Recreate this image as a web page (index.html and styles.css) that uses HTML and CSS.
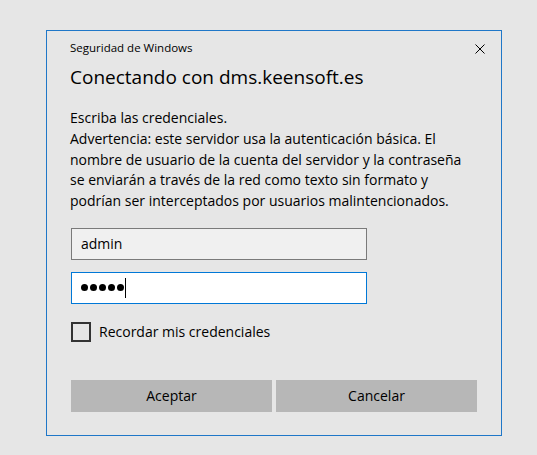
FILE: index.html
```html
<!DOCTYPE html>
<html lang="es">
<head>
<meta charset="utf-8">
<title>Seguridad de Windows</title>
<link rel="stylesheet" href="styles.css">
</head>
<body>
<div class="dialog">
  <div class="titlebar">
    <span class="app-title">Seguridad de Windows</span>
    <svg class="close" width="10" height="10" viewBox="0 0 10 10" aria-label="Cerrar">
      <path d="M0.5 0.5 L9.5 9.5 M9.5 0.5 L0.5 9.5" stroke="#000" stroke-width="1" fill="none"/>
    </svg>
  </div>
  <div class="content">
    <h1 class="heading">Conectando con dms.keensoft.es</h1>
    <p class="message">Escriba las credenciales.<br>Advertencia: este servidor usa la autenticación básica. El<br>nombre de usuario de la cuenta del servidor y la contraseña<br>se enviarán a través de la red como texto sin formato y<br>podrían ser interceptados por usuarios malintencionados.</p>
    <div class="field field-user">admin</div>
    <div class="field field-pass">
      <span class="dot"></span><span class="dot"></span><span class="dot"></span><span class="dot"></span><span class="dot"></span><span class="caret"></span>
    </div>
    <label class="remember">
      <span class="checkbox"></span>
      <span class="remember-text">Recordar mis credenciales</span>
    </label>
    <div class="buttons">
      <div class="btn">Aceptar</div>
      <div class="btn">Cancelar</div>
    </div>
  </div>
</div>
</body>
</html>
```

FILE: styles.css
```css
html, body {
  margin: 0;
  padding: 0;
  background: #e6e6e6;
}
body {
  font-family: "Open Sans", "Noto Sans", sans-serif;
  color: #000;
  width: 537px;
  height: 455px;
  overflow: hidden;
}
.dialog {
  box-sizing: border-box;
  width: 456px;
  height: 406px;
  margin: 30px 0 0 46px;
  border: 1px solid #1f77c8;
  background: #e6e6e6;
}
.titlebar {
  display: flex;
  align-items: center;
  justify-content: space-between;
  padding: 9px 16px 0 23px;
  height: 16px;
}
.app-title {
  font-size: 11.5px;
  line-height: 16px;
}
.close {
  display: block;
  margin-top: 2px;
}
.content {
  padding: 0 24px 0 24px;
}
.heading {
  margin: 7px 0 0 -1px;
  font-size: 19px;
  font-weight: 400;
  line-height: 28px;
}
.message {
  margin: 17px 0 0 -1px;
  font-size: 14px;
  line-height: 20.75px;
  white-space: nowrap;
}
.field {
  box-sizing: border-box;
  width: 296px;
  height: 32px;
  font-size: 14px;
  display: flex;
  align-items: center;
  padding-left: 9px;
}
.field-user {
  margin-top: 16px;
  background: #f0f0f0;
  border: 1px solid #7a7a7a;
}
.field-pass {
  margin-top: 12px;
  background: #fff;
  border: 1px solid #0078d7;
  gap: 2px;
}
.dot {
  width: 7px;
  height: 7px;
  border-radius: 50%;
  background: #000;
}
.caret {
  width: 1px;
  height: 20px;
  background: #000;
  margin-left: -1px;
}
.remember {
  display: flex;
  align-items: center;
  margin-top: 18px;
  font-size: 14px;
  gap: 8px;
}
.checkbox {
  box-sizing: border-box;
  width: 20px;
  height: 20px;
  border: 2px solid #333;
}
.buttons {
  display: flex;
  gap: 4px;
  margin-top: 38px;
}
.btn {
  flex: 1;
  height: 32px;
  background: #b7b7b7;
  font-size: 14px;
  display: flex;
  align-items: center;
  justify-content: center;
}
```
